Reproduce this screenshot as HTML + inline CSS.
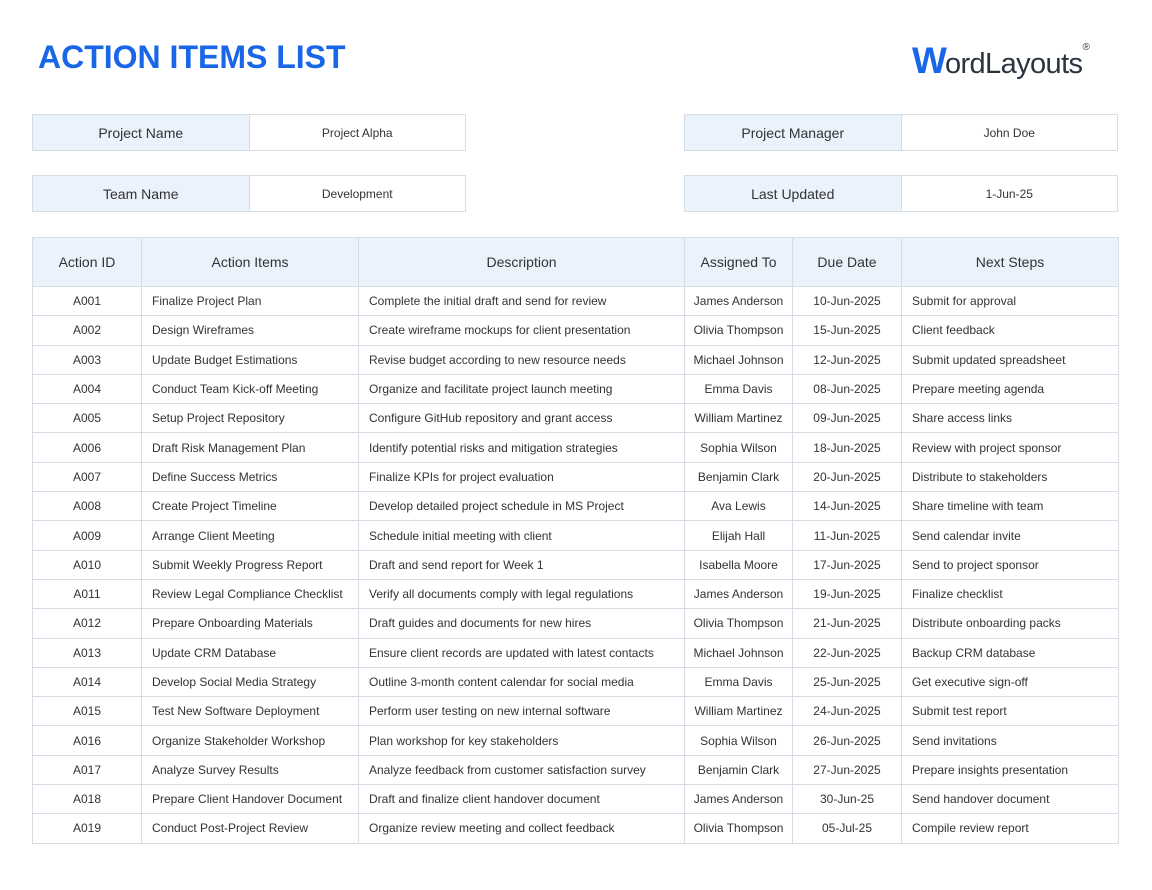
<!DOCTYPE html>
<html><head><meta charset="utf-8"><style>
body{margin:0;width:1152px;height:890px;background:#fff;font-family:"Liberation Sans",sans-serif;color:#333;position:relative;overflow:hidden}
.t{position:absolute;left:38px;top:39px;font-size:32px;font-weight:bold;color:#1a66e8;letter-spacing:0}
.logo{position:absolute;left:912px;top:40px;font-size:29px;color:#2a3440;letter-spacing:-0.6px}
.logo b{color:#1a66e8;font-size:37px;font-weight:900;letter-spacing:-6px;margin-right:4px}
.logo sup{font-size:10px;vertical-align:top;position:relative;top:2px}
.box{position:absolute;display:flex;width:434px;height:37px;border:1px solid #d7dde5;box-sizing:border-box}
.box div{flex:1;display:flex;align-items:center;justify-content:center}
.box .l{background:#eaf2fc;font-size:14px;color:#333;border-right:1px solid #d7dde5}
.box .v{font-size:12px}
table{position:absolute;left:32px;top:237px;border-collapse:collapse;table-layout:fixed;width:1086px}
td,th{border:1px solid #d7dde5;font-size:12px;height:28.3px;padding:0 0 0 10px;text-align:left;white-space:nowrap;overflow:hidden;color:#333}
th{background:#eaf2fc;font-weight:normal;font-size:14px;height:48px;text-align:center;padding:0}
td.c{text-align:center;padding:0}
</style></head><body>
<div class="t">ACTION ITEMS LIST</div>
<div class="logo"><b>W</b>ordLayouts<sup>®</sup></div>
<div class="box" style="left:32px;top:114px"><div class="l">Project Name</div><div class="v">Project Alpha</div></div>
<div class="box" style="left:684px;top:114px"><div class="l">Project Manager</div><div class="v">John Doe</div></div>
<div class="box" style="left:32px;top:175px"><div class="l">Team Name</div><div class="v">Development</div></div>
<div class="box" style="left:684px;top:175px"><div class="l">Last Updated</div><div class="v">1-Jun-25</div></div>
<table>
<colgroup><col style="width:109px"><col style="width:217px"><col style="width:326px"><col style="width:108px"><col style="width:109px"><col style="width:217px"></colgroup>
<tr><th>Action ID</th><th>Action Items</th><th>Description</th><th>Assigned To</th><th>Due Date</th><th>Next Steps</th></tr>
<tr><td class="c">A001</td><td>Finalize Project Plan</td><td>Complete the initial draft and send for review</td><td class="c">James Anderson</td><td class="c">10-Jun-2025</td><td>Submit for approval</td></tr>
<tr><td class="c">A002</td><td>Design Wireframes</td><td>Create wireframe mockups for client presentation</td><td class="c">Olivia Thompson</td><td class="c">15-Jun-2025</td><td>Client feedback</td></tr>
<tr><td class="c">A003</td><td>Update Budget Estimations</td><td>Revise budget according to new resource needs</td><td class="c">Michael Johnson</td><td class="c">12-Jun-2025</td><td>Submit updated spreadsheet</td></tr>
<tr><td class="c">A004</td><td>Conduct Team Kick-off Meeting</td><td>Organize and facilitate project launch meeting</td><td class="c">Emma Davis</td><td class="c">08-Jun-2025</td><td>Prepare meeting agenda</td></tr>
<tr><td class="c">A005</td><td>Setup Project Repository</td><td>Configure GitHub repository and grant access</td><td class="c">William Martinez</td><td class="c">09-Jun-2025</td><td>Share access links</td></tr>
<tr><td class="c">A006</td><td>Draft Risk Management Plan</td><td>Identify potential risks and mitigation strategies</td><td class="c">Sophia Wilson</td><td class="c">18-Jun-2025</td><td>Review with project sponsor</td></tr>
<tr><td class="c">A007</td><td>Define Success Metrics</td><td>Finalize KPIs for project evaluation</td><td class="c">Benjamin Clark</td><td class="c">20-Jun-2025</td><td>Distribute to stakeholders</td></tr>
<tr><td class="c">A008</td><td>Create Project Timeline</td><td>Develop detailed project schedule in MS Project</td><td class="c">Ava Lewis</td><td class="c">14-Jun-2025</td><td>Share timeline with team</td></tr>
<tr><td class="c">A009</td><td>Arrange Client Meeting</td><td>Schedule initial meeting with client</td><td class="c">Elijah Hall</td><td class="c">11-Jun-2025</td><td>Send calendar invite</td></tr>
<tr><td class="c">A010</td><td>Submit Weekly Progress Report</td><td>Draft and send report for Week 1</td><td class="c">Isabella Moore</td><td class="c">17-Jun-2025</td><td>Send to project sponsor</td></tr>
<tr><td class="c">A011</td><td>Review Legal Compliance Checklist</td><td>Verify all documents comply with legal regulations</td><td class="c">James Anderson</td><td class="c">19-Jun-2025</td><td>Finalize checklist</td></tr>
<tr><td class="c">A012</td><td>Prepare Onboarding Materials</td><td>Draft guides and documents for new hires</td><td class="c">Olivia Thompson</td><td class="c">21-Jun-2025</td><td>Distribute onboarding packs</td></tr>
<tr><td class="c">A013</td><td>Update CRM Database</td><td>Ensure client records are updated with latest contacts</td><td class="c">Michael Johnson</td><td class="c">22-Jun-2025</td><td>Backup CRM database</td></tr>
<tr><td class="c">A014</td><td>Develop Social Media Strategy</td><td>Outline 3-month content calendar for social media</td><td class="c">Emma Davis</td><td class="c">25-Jun-2025</td><td>Get executive sign-off</td></tr>
<tr><td class="c">A015</td><td>Test New Software Deployment</td><td>Perform user testing on new internal software</td><td class="c">William Martinez</td><td class="c">24-Jun-2025</td><td>Submit test report</td></tr>
<tr><td class="c">A016</td><td>Organize Stakeholder Workshop</td><td>Plan workshop for key stakeholders</td><td class="c">Sophia Wilson</td><td class="c">26-Jun-2025</td><td>Send invitations</td></tr>
<tr><td class="c">A017</td><td>Analyze Survey Results</td><td>Analyze feedback from customer satisfaction survey</td><td class="c">Benjamin Clark</td><td class="c">27-Jun-2025</td><td>Prepare insights presentation</td></tr>
<tr><td class="c">A018</td><td>Prepare Client Handover Document</td><td>Draft and finalize client handover document</td><td class="c">James Anderson</td><td class="c">30-Jun-25</td><td>Send handover document</td></tr>
<tr><td class="c">A019</td><td>Conduct Post-Project Review</td><td>Organize review meeting and collect feedback</td><td class="c">Olivia Thompson</td><td class="c">05-Jul-25</td><td>Compile review report</td></tr>
</table>
</body></html>
